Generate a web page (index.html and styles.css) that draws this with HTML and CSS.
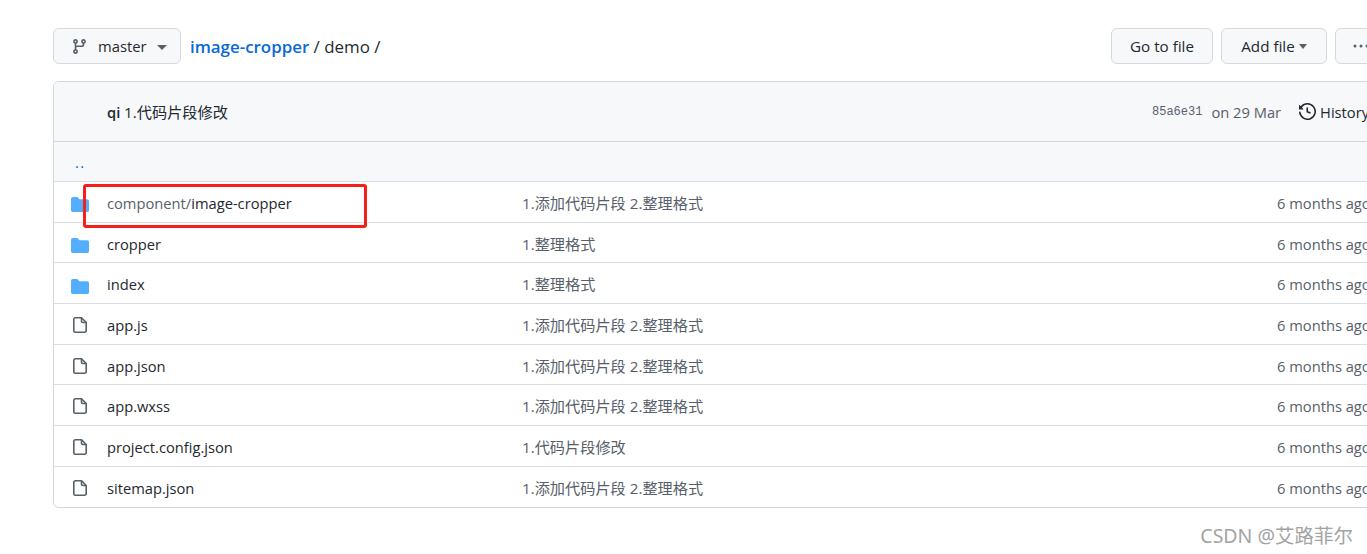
FILE: index.html
```html
<!DOCTYPE html>
<html lang="en">
<head>
<meta charset="utf-8">
<title>image-cropper / demo</title>
<link rel="stylesheet" href="styles.css">
</head>
<body>
<svg class="defs" width="0" height="0" aria-hidden="true">
  <symbol id="folder" viewBox="0 1 16 14" preserveAspectRatio="none"><path d="M1.75 1A1.75 1.75 0 0 0 0 2.75v10.5C0 14.22.78 15 1.75 15h12.5A1.75 1.75 0 0 0 16 13.25v-8.5A1.75 1.75 0 0 0 14.25 3H7.5a.25.25 0 0 1-.2-.1l-.9-1.2C6.07 1.26 5.55 1 5 1H1.75z"/></symbol>
  <symbol id="file" viewBox="0 0 14 16"><path class="file-line" d="M2.3.8H8.5L13.2 5.5V13.7A1.5 1.5 0 0 1 11.7 15.2H2.3A1.5 1.5 0 0 1 .8 13.7V2.3A1.5 1.5 0 0 1 2.3.8Z"/><path class="file-line" d="M8.5.8V4A1.5 1.5 0 0 0 10 5.5H13.2"/></symbol>
</svg>

<main class="page">
  <div class="toolbar">
    <button class="btn branch">
      <svg class="icon17" viewBox="0 0 16 16"><path fill-rule="evenodd" d="M11.75 2.5a.75.75 0 1 0 0 1.5.75.75 0 0 0 0-1.5zm-2.25.75a2.25 2.25 0 1 1 3 2.122V6A2.5 2.5 0 0 1 10 8.5H6a1 1 0 0 0-1 1v1.128a2.251 2.251 0 1 1-1.5 0V5.372a2.25 2.25 0 1 1 1.5 0v1.836A2.492 2.492 0 0 1 6 7h4a1 1 0 0 0 1-1v-.628A2.25 2.25 0 0 1 9.5 3.25zM4.25 12a.75.75 0 1 0 0 1.5.75.75 0 0 0 0-1.5zM3.5 3.25a.75.75 0 1 1 1.5 0 .75.75 0 0 1-1.5 0z"/></svg>
      <span>master</span><i class="caret"></i>
    </button>
    <div class="crumbs"><a class="repo">image-cropper</a> <span class="sep">/</span> <span>demo</span> <span class="sep">/</span></div>
    <div class="actions">
      <button class="btn goto">Go to file</button>
      <button class="btn add">Add file<i class="caret dark"></i></button>
      <button class="btn more"><svg class="icon16" viewBox="0 0 16 16"><circle cx="2" cy="8" r="1.5"/><circle cx="8" cy="8" r="1.5"/><circle cx="14" cy="8" r="1.5"/></svg></button>
    </div>
  </div>

  <section class="box">
    <header class="commit">
      <div class="commit-msg"><b>qi</b> <span class="cjk">1.代码片段修改</span></div>
      <div class="commit-meta">
        <code>85a6e31</code><span class="on">on 29 Mar</span>
        <span class="history"><svg class="icon17 dark" viewBox="0 0 16 16"><path fill-rule="evenodd" d="M1.643 3.143L.427 1.927A.25.25 0 0 0 0 2.104V5.75c0 .138.112.25.25.25h3.646a.25.25 0 0 0 .177-.427L2.715 4.215a6.5 6.5 0 1 1-1.18 4.458.75.75 0 1 0-1.493.154 8.001 8.001 0 1 0 1.6-5.684zM7.75 4a.75.75 0 0 1 .75.75v2.992l2.028.812a.75.75 0 0 1-.557 1.392l-2.5-1A.75.75 0 0 1 7 8.25v-3.5A.75.75 0 0 1 7.75 4z"/></svg>History</span>
      </div>
    </header>
    <div class="row parent"><a class="dots">..</a></div>
    <div class="row"><svg class="ico folder"><use href="#folder"/></svg><span class="name"><span class="muted">component/</span>image-cropper</span><span class="msg">1.添加代码片段 2.整理格式</span><span class="time">6 months ago</span></div>
    <div class="row"><svg class="ico folder"><use href="#folder"/></svg><span class="name">cropper</span><span class="msg">1.整理格式</span><span class="time">6 months ago</span></div>
    <div class="row"><svg class="ico folder"><use href="#folder"/></svg><span class="name">index</span><span class="msg">1.整理格式</span><span class="time">6 months ago</span></div>
    <div class="row"><svg class="ico file"><use href="#file"/></svg><span class="name">app.js</span><span class="msg">1.添加代码片段 2.整理格式</span><span class="time">6 months ago</span></div>
    <div class="row"><svg class="ico file"><use href="#file"/></svg><span class="name">app.json</span><span class="msg">1.添加代码片段 2.整理格式</span><span class="time">6 months ago</span></div>
    <div class="row"><svg class="ico file"><use href="#file"/></svg><span class="name">app.wxss</span><span class="msg">1.添加代码片段 2.整理格式</span><span class="time">6 months ago</span></div>
    <div class="row"><svg class="ico file"><use href="#file"/></svg><span class="name">project.config.json</span><span class="msg">1.代码片段修改</span><span class="time">6 months ago</span></div>
    <div class="row"><svg class="ico file"><use href="#file"/></svg><span class="name">sitemap.json</span><span class="msg">1.添加代码片段 2.整理格式</span><span class="time">6 months ago</span></div>
  </section>
</main>
<div class="annotation"></div>
<div class="watermark">CSDN @艾路菲尔</div>
</body>
</html>
```
FILE: styles.css
```css
* { box-sizing: border-box; }
html, body { margin: 0; height: 100%; overflow: hidden; background: #fff; }
body {
  font-family: "Open Sans", "Noto Sans CJK SC", sans-serif;
  font-size: 14.7px;
  color: #24292f;
  position: relative;
}
.defs { position: absolute; }
.page { width: 1322px; margin-left: 53px; padding-top: 28px; }
.toolbar { display: flex; align-items: center; height: 36px; margin-bottom: 17px; }
.btn {
  height: 36px;
  border: 1px solid #d5d8dc;
  border-radius: 6px;
  background: #f6f8fa;
  font: 500 15.2px "Open Sans", sans-serif;
  color: #24292f;
  display: inline-flex;
  align-items: center;
  justify-content: center;
  padding: 0;
}
.branch { width: 128px; justify-content: flex-start; padding-left: 17px; gap: 10px; font-weight: 400; font-size: 14.8px; }
.icon16 { width: 16px; height: 16px; fill: #57606a; }
.icon17 { width: 17px; height: 17px; fill: #57606a; flex: none; }
.icon17.dark { fill: #24292f; }
.caret {
  width: 0; height: 0;
  border-left: 5px solid transparent;
  border-right: 5px solid transparent;
  border-top: 5px solid #57606a;
  margin-top: 2px;
}
.caret.dark { margin-left: 4px; margin-top: 0; border-left-width: 4.5px; border-right-width: 4.5px; }
.crumbs { margin-left: 9px; font-size: 16.9px; white-space: nowrap; }
.repo { color: #0969da; font-weight: 600; }
.sep { color: #24292f; }
.actions { margin-left: auto; display: flex; gap: 8px; }
.goto { width: 102px; }
.add { width: 106px; }
.more { width: 52px; margin-right: -12px; }
.box {
  border: 1px solid #d0d7de;
  border-radius: 6px;
  height: 427px;
  overflow: hidden;
}
.commit {
  height: 60px;
  background: #f6f8fa;
  display: flex;
  align-items: center;
  justify-content: space-between;
  padding: 0 0 0 53px;
  border-bottom: 1px solid #d0d7de;
}
.commit-msg { margin-bottom: 2px; }
.commit-msg b { font-weight: 600; }
.cjk { font-size: 15.2px; }
.commit-meta { display: flex; align-items: center; color: #57606a; width: 222px; flex: none; white-space: nowrap; }
code { font: 12px "Liberation Mono", monospace; color: #57606a; }
.on { margin-left: 9px; }
.history { margin-left: 18px; display: inline-flex; align-items: center; gap: 4px; color: #24292f; font-weight: 500; }
.row {
  height: 40.7px;
  display: flex;
  align-items: center;
  border-top: 1px solid #d8dee4;
  padding-left: 17px;
  padding-top: 2px;
  white-space: nowrap;
}
.parent { height: 39px; background: #f6f8fa; border-top: 0; padding-left: 21px; padding-top: 0; }
.dots { color: #0969da; letter-spacing: 1.5px; }
.ico { width: 14px; height: 16px; flex: none; }
.folder { width: 18px; height: 15px; fill: #54aeff; margin-top: 4px; }
.file { margin-left: 2px; fill: none; }
.file-line { fill: none; stroke: #57606a; stroke-width: 1.6; stroke-linejoin: round; }
.name { width: 415px; margin-left: 18px; }
.folder + .name { margin-left: 18px; }
.file + .name { margin-left: 20px; }
.muted { color: #57606a; }
.msg { flex: 1; color: #57606a; font-size: 15.2px; margin-bottom: 2px; }
.time { color: #57606a; width: 97px; flex: none; }
.annotation {
  position: absolute;
  left: 83px; top: 184px;
  width: 284px; height: 44px;
  border: 3px solid #f5201a;
  border-radius: 3px;
}
.watermark {
  position: absolute;
  right: 14px; top: 523px;
  font-size: 19.5px;
  line-height: 26px;
  color: #a3a3a3;
  font-family: "Noto Sans", "Noto Sans CJK SC", sans-serif;
}
```
